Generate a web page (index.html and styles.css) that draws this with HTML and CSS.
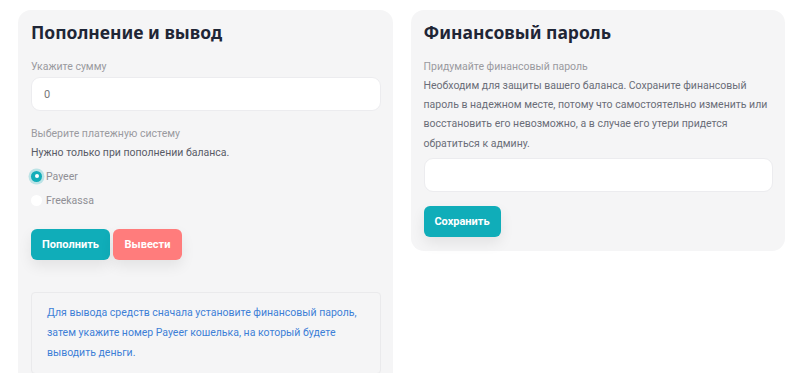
FILE: index.html
```html
<!DOCTYPE html>
<html lang="ru">
<head>
<meta charset="utf-8">
<link rel="stylesheet" href="styles.css">
</head>
<body>
<div class="page">
  <section class="card card-left">
    <h2 class="title">Пополнение и вывод</h2>
    <div class="label">Укажите сумму</div>
    <div class="input"><span class="val">0</span></div>
    <div class="label label-sys">Выберите платежную систему</div>
    <div class="note">Нужно только при пополнении баланса.</div>
    <div class="radios">
      <div class="radio-row"><span class="radio radio-on"></span><span class="radio-text">Payeer</span></div>
      <div class="radio-row"><span class="radio"></span><span class="radio-text">Freekassa</span></div>
    </div>
    <div class="btns">
      <button class="btn btn-teal">Пополнить</button>
      <button class="btn btn-red">Вывести</button>
    </div>
    <div class="info">Для вывода средств сначала установите финансовый пароль, затем укажите номер Payeer кошелька, на который будете выводить деньги.</div>
  </section>
  <section class="card card-right">
    <h2 class="title">Финансовый пароль</h2>
    <div class="label label-pw">Придумайте финансовый пароль</div>
    <p class="desc">Необходим для защиты вашего баланса. Сохраните финансовый пароль в надежном месте, потому что самостоятельно изменить или восстановить его невозможно, а в случае его утери придется обратиться к админу.</p>
    <div class="input input-pw"></div>
    <button class="btn btn-teal btn-save">Сохранить</button>
  </section>
</div>
</body>
</html>
```
FILE: styles.css
```css
* { box-sizing: border-box; }
html, body { margin: 0; padding: 0; background: #fff; }
body {
  font-family: Roboto, "Liberation Sans", sans-serif;
  font-size: 10.5px;
  color: #666;
  height: 373px;
  overflow: hidden;
}
.page {
  display: flex;
  align-items: flex-start;
  gap: 18px;
  padding: 10px 15px 0 18px;
}
.card {
  flex: 1;
  background: #f5f5f6;
  border-radius: 13px;
  padding: 8px 12px 14px 13px;
}
.card-left { height: 363px; overflow: hidden; border-bottom-left-radius: 0; border-bottom-right-radius: 0; }
.title {
  margin: 0;
  font-family: "Noto Sans", "Open Sans", sans-serif;
  font-weight: 700;
  font-size: 17.5px;
  line-height: 28px;
  color: #1f2636;
}
.label {
  color: #9a9a9f;
  font-size: 10.5px;
  line-height: 19px;
  margin-top: 11px;
}
.input {
  margin-top: 1px;
  height: 34px;
  background: #fff;
  border: 1px solid #ececef;
  border-radius: 9px;
  display: flex;
  align-items: center;
  padding-left: 12px;
}
.val { color: #777; font-size: 11px; }
.label-sys { margin-top: 13px; }
.note { color: #585b67; line-height: 19px; margin-top: 0; }
.radios { margin-top: 2px; }
.radio-row {
  display: flex;
  align-items: center;
  height: 24px;
}
.radio {
  width: 11px;
  height: 11px;
  border-radius: 50%;
  background: #fff;
  margin-right: 4px;
  position: relative;
}
.radio-on {
  background: #14aeb9;
  box-shadow: 0 0 0 2.5px rgba(20, 174, 185, 0.25);
}
.radio-on::after {
  content: "";
  position: absolute;
  left: 3.5px;
  top: 3.5px;
  width: 4px;
  height: 4px;
  border-radius: 50%;
  background: #fff;
}
.radio-text { color: #8f8f95; font-size: 10.5px; }
.btns {
  display: flex;
  gap: 3px;
  margin-top: 17px;
}
.btn {
  border: 0;
  border-radius: 6px;
  height: 31px;
  color: #fff;
  font-family: Roboto, "Liberation Sans", sans-serif;
  font-weight: 700;
  font-size: 11px;
  padding: 0;
  box-shadow: 0 6px 14px rgba(0, 0, 0, 0.08);
}
.btn-teal { background: #10adb9; width: 79px; }
.btn-red { background: #ff7c7c; width: 69px; }
.info {
  margin-top: 32px;
  border: 1px solid #eaeaec;
  border-radius: 4px;
  padding: 10px 15px 10px 15px;
  color: #3d7fd6;
  line-height: 20px;
  font-size: 10.5px;
}
.label-pw { margin-top: 11px; }
.desc {
  margin: 0;
  color: #6a6d78;
  line-height: 19.2px;
}
.input-pw { margin-top: 5px; }
.btn-save { margin-top: 14px; width: 77px; display: block; }
```
